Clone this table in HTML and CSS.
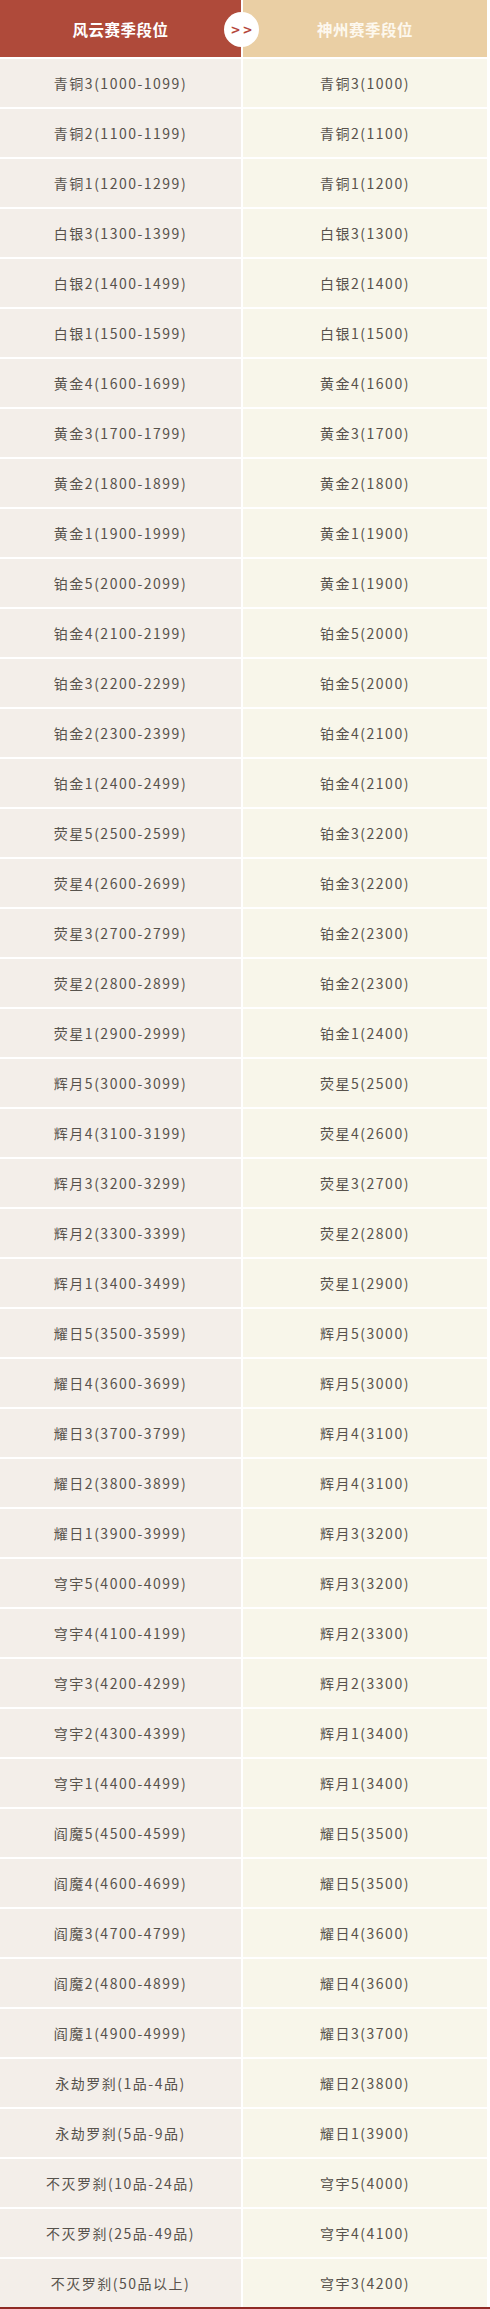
FILE: index.html
```html
<!DOCTYPE html>
<html lang="zh">
<head>
<meta charset="utf-8">
<title>段位对照</title>
<link rel="stylesheet" href="styles.css">
</head>
<body>
<div class="table">
  <div class="head">
    <div class="hcell hleft">风云赛季段位</div>
    <div class="hcell hright">神州赛季段位</div>
    <div class="arrow">&gt;&gt;</div>
  </div>
  <div class="row"><div class="c l">青铜3(1000-1099)</div><div class="c r">青铜3(1000)</div></div>
  <div class="row"><div class="c l">青铜2(1100-1199)</div><div class="c r">青铜2(1100)</div></div>
  <div class="row"><div class="c l">青铜1(1200-1299)</div><div class="c r">青铜1(1200)</div></div>
  <div class="row"><div class="c l">白银3(1300-1399)</div><div class="c r">白银3(1300)</div></div>
  <div class="row"><div class="c l">白银2(1400-1499)</div><div class="c r">白银2(1400)</div></div>
  <div class="row"><div class="c l">白银1(1500-1599)</div><div class="c r">白银1(1500)</div></div>
  <div class="row"><div class="c l">黄金4(1600-1699)</div><div class="c r">黄金4(1600)</div></div>
  <div class="row"><div class="c l">黄金3(1700-1799)</div><div class="c r">黄金3(1700)</div></div>
  <div class="row"><div class="c l">黄金2(1800-1899)</div><div class="c r">黄金2(1800)</div></div>
  <div class="row"><div class="c l">黄金1(1900-1999)</div><div class="c r">黄金1(1900)</div></div>
  <div class="row"><div class="c l">铂金5(2000-2099)</div><div class="c r">黄金1(1900)</div></div>
  <div class="row"><div class="c l">铂金4(2100-2199)</div><div class="c r">铂金5(2000)</div></div>
  <div class="row"><div class="c l">铂金3(2200-2299)</div><div class="c r">铂金5(2000)</div></div>
  <div class="row"><div class="c l">铂金2(2300-2399)</div><div class="c r">铂金4(2100)</div></div>
  <div class="row"><div class="c l">铂金1(2400-2499)</div><div class="c r">铂金4(2100)</div></div>
  <div class="row"><div class="c l">荧星5(2500-2599)</div><div class="c r">铂金3(2200)</div></div>
  <div class="row"><div class="c l">荧星4(2600-2699)</div><div class="c r">铂金3(2200)</div></div>
  <div class="row"><div class="c l">荧星3(2700-2799)</div><div class="c r">铂金2(2300)</div></div>
  <div class="row"><div class="c l">荧星2(2800-2899)</div><div class="c r">铂金2(2300)</div></div>
  <div class="row"><div class="c l">荧星1(2900-2999)</div><div class="c r">铂金1(2400)</div></div>
  <div class="row"><div class="c l">辉月5(3000-3099)</div><div class="c r">荧星5(2500)</div></div>
  <div class="row"><div class="c l">辉月4(3100-3199)</div><div class="c r">荧星4(2600)</div></div>
  <div class="row"><div class="c l">辉月3(3200-3299)</div><div class="c r">荧星3(2700)</div></div>
  <div class="row"><div class="c l">辉月2(3300-3399)</div><div class="c r">荧星2(2800)</div></div>
  <div class="row"><div class="c l">辉月1(3400-3499)</div><div class="c r">荧星1(2900)</div></div>
  <div class="row"><div class="c l">耀日5(3500-3599)</div><div class="c r">辉月5(3000)</div></div>
  <div class="row"><div class="c l">耀日4(3600-3699)</div><div class="c r">辉月5(3000)</div></div>
  <div class="row"><div class="c l">耀日3(3700-3799)</div><div class="c r">辉月4(3100)</div></div>
  <div class="row"><div class="c l">耀日2(3800-3899)</div><div class="c r">辉月4(3100)</div></div>
  <div class="row"><div class="c l">耀日1(3900-3999)</div><div class="c r">辉月3(3200)</div></div>
  <div class="row"><div class="c l">穹宇5(4000-4099)</div><div class="c r">辉月3(3200)</div></div>
  <div class="row"><div class="c l">穹宇4(4100-4199)</div><div class="c r">辉月2(3300)</div></div>
  <div class="row"><div class="c l">穹宇3(4200-4299)</div><div class="c r">辉月2(3300)</div></div>
  <div class="row"><div class="c l">穹宇2(4300-4399)</div><div class="c r">辉月1(3400)</div></div>
  <div class="row"><div class="c l">穹宇1(4400-4499)</div><div class="c r">辉月1(3400)</div></div>
  <div class="row"><div class="c l">阎魔5(4500-4599)</div><div class="c r">耀日5(3500)</div></div>
  <div class="row"><div class="c l">阎魔4(4600-4699)</div><div class="c r">耀日5(3500)</div></div>
  <div class="row"><div class="c l">阎魔3(4700-4799)</div><div class="c r">耀日4(3600)</div></div>
  <div class="row"><div class="c l">阎魔2(4800-4899)</div><div class="c r">耀日4(3600)</div></div>
  <div class="row"><div class="c l">阎魔1(4900-4999)</div><div class="c r">耀日3(3700)</div></div>
  <div class="row"><div class="c l">永劫罗刹(1品-4品)</div><div class="c r">耀日2(3800)</div></div>
  <div class="row"><div class="c l">永劫罗刹(5品-9品)</div><div class="c r">耀日1(3900)</div></div>
  <div class="row"><div class="c l">不灭罗刹(10品-24品)</div><div class="c r">穹宇5(4000)</div></div>
  <div class="row"><div class="c l">不灭罗刹(25品-49品)</div><div class="c r">穹宇4(4100)</div></div>
  <div class="row"><div class="c l">不灭罗刹(50品以上)</div><div class="c r">穹宇3(4200)</div></div>
</div>
</body>
</html>
```

FILE: styles.css
```css
html, body {
  margin: 0;
  padding: 0;
  background: #ffffff;
}
body {
  width: 490px;
  font-family: "Noto Sans CJK SC", "Noto Sans", sans-serif;
}
.table {
  display: flex;
  flex-direction: column;
  gap: 2px;
  width: 490px;
  border-bottom: 2px solid #8e2a24;
}
.head {
  position: relative;
  display: flex;
  gap: 2px;
  height: 57px;
  padding-right: 3px;
}
.hcell {
  display: flex;
  align-items: center;
  justify-content: center;
  font-size: 15.5px;
  font-weight: bold;
  letter-spacing: 0.5px;
}
.hleft {
  width: 241px;
  background: #af4a3a;
  color: #ffffff;
}
.hright {
  width: 244px;
  background: #eacfa4;
  color: #fdf8ee;
}
.arrow {
  position: absolute;
  left: 224px;
  top: 12px;
  width: 35px;
  height: 35px;
  border-radius: 50%;
  background: #ffffff;
  color: #b5473a;
  font-size: 12px;
  font-weight: bold;
  letter-spacing: 2px;
  display: flex;
  align-items: center;
  justify-content: center;
  font-family: "DejaVu Sans", sans-serif;
  padding-left: 2px;
  box-sizing: border-box;
}
.row {
  display: flex;
  gap: 2px;
  height: 48px;
  padding-right: 3px;
}
.c {
  display: flex;
  align-items: center;
  justify-content: center;
  font-size: 14px;
  color: #57524c;
  letter-spacing: 1.5px;
}
.l {
  width: 241px;
  background: #f3eee9;
}
.r {
  width: 244px;
  background: #f8f6ea;
}
```
